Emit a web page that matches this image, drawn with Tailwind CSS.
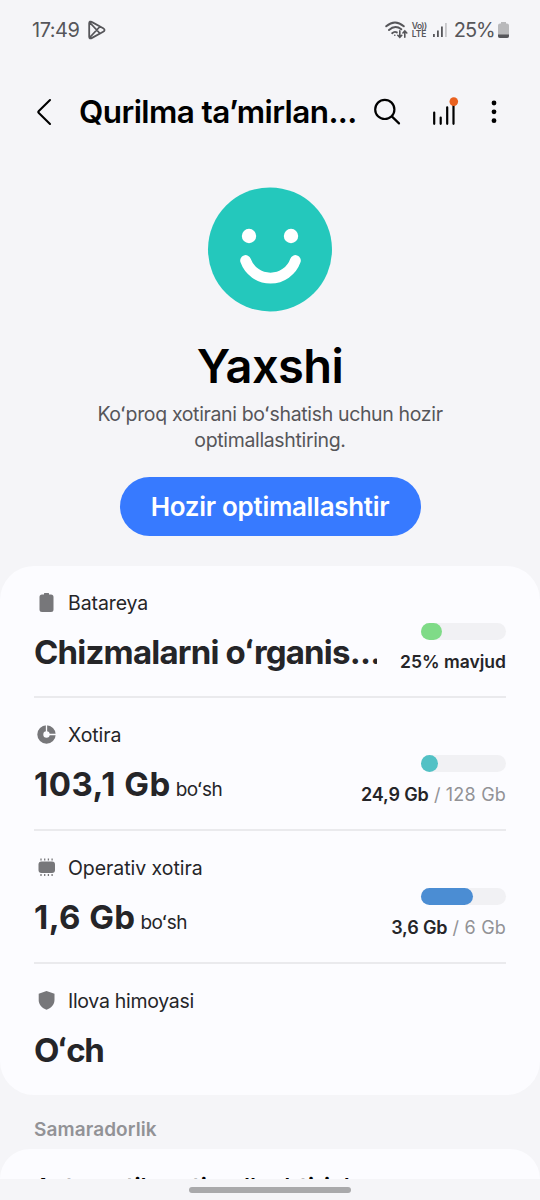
<!DOCTYPE html>
<html lang="uz">
<head>
<meta charset="utf-8">
<title>Qurilma ta’mirlanishi</title>
<script src="https://cdn.jsdelivr.net/npm/@tailwindcss/browser@4"></script>
</head>
<body class="bg-[#f5f5f8]">
<div class="relative flex h-[1200px] w-[540px] flex-col overflow-hidden bg-[#f5f5f8] font-['Inter',sans-serif] text-[#252528] whitespace-nowrap">
  <!-- Status bar -->
  <div class="flex h-[60px] shrink-0 items-center pl-8 pr-[31px] text-[#56565a]">
    <span class="text-[20px] leading-[20px] tracking-[-0.5px]">17:49</span>
    <svg class="ml-[9px]" width="18" height="20" viewBox="0 0 18 20" fill="none" stroke="currentColor" stroke-width="1.8" stroke-linejoin="round" stroke-linecap="round"><path d="M1.200 3.200V16.800C1.200 18.400 2.400 18.800 3.600 18.100L15.200 11.800C17 10.800 17 9.200 15.200 8.200L3.600 1.900C2.400 1.200 1.200 1.600 1.200 3.200ZM1.700 2.500L12 13.500M1.700 17.500L12 6.500"/></svg>
    <div class="ml-auto flex items-center">
      <svg width="23" height="18" viewBox="0 0 23 18" fill="none" stroke="currentColor" stroke-width="1.9" stroke-linecap="round"><path d="M1.200 5.300Q10 -2.500 18.800 5.300M4 9Q10 3.500 16.300 8.300M7.200 12.200Q9.500 10 11.800 11.400"/><circle cx="9.800" cy="14.200" r=".8" fill="currentColor" stroke="none"/><path stroke-width="1.6" d="M14.800 9.900V16.200M12.800 14.300L14.800 16.400L16.800 14.300M19.800 16.200V10M17.900 12L19.800 9.900L21.800 12"/></svg>
      <div class="ml-[4px] flex w-[16px] flex-col text-[8.5px] leading-[8.5px] font-semibold"><span class="tracking-[-0.6px]">Vo))</span><span class="tracking-[-0.1px]">LTE</span></div>
      <svg class="ml-[5px]" width="15" height="16" viewBox="0 0 15 16" fill="currentColor"><rect x="0" y="12" width="1.800" height="3"/><rect x="4" y="8.500" width="1.800" height="6.500"/><rect x="8" y="4.500" width="1.800" height="10.500"/><rect x="12" y="1" width="1.800" height="14" fill="#c6c6c9"/></svg>
      <span class="ml-[6px] text-[20px] leading-[20px] tracking-[-1.1px]">25%</span>
      <svg class="ml-[3.5px]" width="11" height="16" viewBox="0 0 11 16"><path d="M3 0H8V1.400H9Q11 1.400 11 3.600V14Q11 16 9 16H2Q0 16 0 14V3.600Q0 1.400 2 1.400H3Z" fill="#b9b9bb"/><path d="M0 12.500H11V14Q11 16 9 16H2Q0 16 0 14Z" fill="#56565a"/></svg>
    </div>
  </div>

  <!-- App bar -->
  <div class="flex h-[104px] shrink-0 items-center pl-[36px] text-black">
    <svg width="16" height="28" viewBox="0 0 16 28" fill="none" stroke="currentColor" stroke-width="2.1" stroke-linecap="round" stroke-linejoin="round"><path d="M14 2L2.600 13.200Q1.800 14 2.600 14.800L14 26"/></svg>
    <h1 class="ml-[27px] w-[278px] text-[31.5px] leading-[40px] font-semibold tracking-[-0.6px]">Qurilma ta’mirlan...</h1>
    <svg class="ml-[16px]" width="28" height="28" viewBox="0 0 28 28" fill="none" stroke="currentColor" stroke-width="2.2" stroke-linecap="round"><circle cx="11.800" cy="11.400" r="9.600"/><path d="M18.800 18.400L26 25.400"/></svg>
    <svg class="ml-[31px]" width="27" height="30" viewBox="0 0 27 30" fill="none" stroke="currentColor" stroke-width="2.2" stroke-linecap="round"><path d="M2.200 15.500V26.800M8.700 20.500V26.800M15.200 10.300V26.800M21.500 8V26.800"/><circle cx="21.800" cy="4.600" r="4.300" fill="#e9611f" stroke="none"/></svg>
    <svg class="ml-[32px]" width="6" height="24" viewBox="0 0 6 24" fill="currentColor"><circle cx="3" cy="3" r="2.400"/><circle cx="3" cy="11.800" r="2.400"/><circle cx="3" cy="20.700" r="2.400"/></svg>
  </div>

  <!-- Device status -->
  <section class="flex h-[402px] shrink-0 flex-col items-center pt-[23px]">
    <svg width="126" height="126" viewBox="0 0 126 126"><circle cx="63" cy="62.400" r="62" fill="#24c8bc"/><g fill="#fff"><circle cx="42" cy="49" r="7.200"/><circle cx="84" cy="49" r="7.200"/></g><path d="M38.600 73.500A26.400 26.400 0 0 0 88.400 73.500" fill="none" stroke="#fff" stroke-width="10.800" stroke-linecap="round"/></svg>
    <h2 class="mt-[23px] text-[47px] leading-[60px] font-semibold tracking-[-0.6px] text-black">Yaxshi</h2>
    <p class="mt-[4.5px] text-center text-[19.5px] leading-[26.5px] tracking-[-0.35px] text-[#56565a]">Koʻproq xotirani boʻshatish uchun hozir<br>optimallashtiring.</p>
    <button class="mt-[23.5px] h-[59px] w-[301px] rounded-full bg-[#377aff] text-[26px] leading-[30px] font-semibold tracking-[-0.3px] text-white">Hozir optimallashtir</button>
  </section>

  <!-- Details -->
  <section class="flex h-[529px] shrink-0 flex-col rounded-[34px] bg-[#fcfcff] px-[34px]">
    <div class="flex h-[132px] justify-between border-b-2 border-[#eaeaed]">
      <div class="flex flex-col pt-[25px]">
        <div class="flex h-6 items-center"><svg width="24" height="24" viewBox="0 0 24 24" fill="#77777a"><path d="M10 2.500Q10 2 10.500 2H14.500Q15 2 15 2.500V3.500H17Q19.500 3.500 19.500 6V18.500Q19.500 21 17 21H8Q5.500 21 5.500 18.500V6Q5.500 3.500 8 3.500H10Z"/></svg><span class="ml-[10px] pt-0.5 text-[19.5px] tracking-[-0.1px]">Batareya</span></div>
        <div class="mt-[17px] w-[343px] overflow-hidden text-[33px] leading-[40px] font-bold tracking-[-0.8px]">Chizmalarni oʻrganis...</div>
      </div>
      <div class="flex flex-col items-end pt-[57px]">
        <div class="h-[17px] w-[85px] rounded-full bg-[#f1f1f4]"><div class="h-full w-[21px] rounded-full bg-[#7fdb87]"></div></div>
        <div class="mt-[12px] text-[17.5px] leading-5 font-semibold">25% mavjud</div>
      </div>
    </div>
    <div class="flex h-[133px] justify-between border-b-2 border-[#eaeaed]">
      <div class="flex flex-col pt-[25px]">
        <div class="flex h-6 items-center"><svg width="24" height="24" viewBox="0 0 24 24"><circle cx="12.500" cy="11.500" r="6.200" fill="none" stroke="#77777a" stroke-width="6"/><path d="M12.500 1V11.500H23" fill="none" stroke="#fcfcff" stroke-width="1.300"/></svg><span class="ml-[10px] pt-0.5 text-[19.5px] tracking-[-0.1px]">Xotira</span></div>
        <div class="mt-[17px] flex items-baseline"><span class="text-[33px] leading-[40px] font-bold tracking-[0.5px]">103,1 Gb</span><span class="ml-[5px] text-[19px] tracking-[-0.6px]">boʻsh</span></div>
      </div>
      <div class="flex flex-col items-end pt-[57px]">
        <div class="h-[17px] w-[85px] rounded-full bg-[#f1f1f4]"><div class="h-full w-[17px] rounded-full bg-[#52c1c5]"></div></div>
        <div class="mt-[13px] text-[18px] leading-5 tracking-[0.2px] text-[#929296]"><b class="font-semibold tracking-[-0.15px] text-[#252528]">24,9 Gb</b> / 128 Gb</div>
      </div>
    </div>
    <div class="flex h-[133px] justify-between border-b-2 border-[#eaeaed]">
      <div class="flex flex-col pt-[25px]">
        <div class="flex h-6 items-center"><svg width="24" height="24" viewBox="0 0 24 24" fill="#77777a"><rect x="4.500" y="5.500" width="16.500" height="11.500" rx="3"/><path d="M7 2.500V4.500M10.700 2.500V4.500M14.400 2.500V4.500M18.100 2.500V4.500M7 18V20M10.700 18V20M14.400 18V20M18.100 18V20" stroke="#77777a" stroke-width="1.300"/></svg><span class="ml-[10px] pt-0.5 text-[19.5px] tracking-[-0.05px]">Operativ xotira</span></div>
        <div class="mt-[17px] flex items-baseline"><span class="text-[33px] leading-[40px] font-bold tracking-[0.4px]">1,6 Gb</span><span class="ml-[5px] text-[19px] tracking-[-0.6px]">boʻsh</span></div>
      </div>
      <div class="flex flex-col items-end pt-[57px]">
        <div class="h-[17px] w-[85px] rounded-full bg-[#f1f1f4]"><div class="h-full w-[52px] rounded-full bg-[#4b8dd3]"></div></div>
        <div class="mt-[13px] text-[18px] leading-5 tracking-[0.2px] text-[#929296]"><b class="font-semibold tracking-[-0.15px] text-[#252528]">3,6 Gb</b> / 6 Gb</div>
      </div>
    </div>
    <div class="flex flex-col pt-[25px]">
      <div class="flex h-6 items-center"><svg width="24" height="24" viewBox="0 0 24 24" fill="#77777a"><path d="M12.500 2L20.500 4.800V11C20.500 16 17 18.800 12.500 20.800C8 18.800 4.700 16 4.700 11V4.800Z"/></svg><span class="ml-[10px] pt-0.5 text-[19.5px] tracking-[-0.3px]">Ilova himoyasi</span></div>
      <div class="mt-[17px] text-[33px] leading-[40px] font-bold tracking-[-1.4px]">Oʻch</div>
    </div>
  </section>

  <!-- Next section, cut off by the navigation bar -->
  <h3 class="h-[54px] shrink-0 pl-[34px] text-[19px] leading-[69px] font-semibold tracking-[0.1px] text-[#929296]">Samaradorlik</h3>
  <section class="h-[30px] shrink-0 overflow-hidden rounded-t-[34px] bg-[#fcfcff] px-[34px] pt-[24px] text-[26px] leading-[30px] font-medium tracking-[-0.4px] text-black">Avtomatik optimallashtirish</section>
  <div class="flex h-[21px] shrink-0 items-center justify-center"><div class="h-[6px] w-[162px] rounded-full bg-[#a9a9ab]"></div></div>
</div>
</body>
</html>
